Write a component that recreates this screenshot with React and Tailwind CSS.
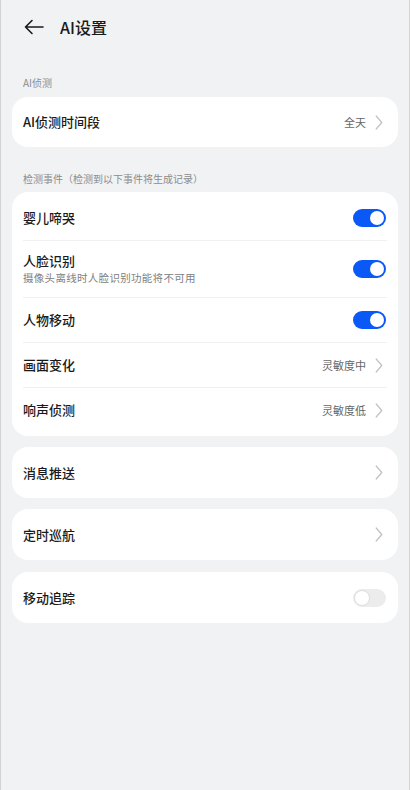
import React, { useState } from "react";

const font = { fontFamily: '"Noto Sans CJK SC", "Noto Sans", sans-serif' };

const Chevron = () => (
    <svg width="8" height="15" viewBox="0 0 8 15" fill="none" className="shrink-0">
        <path d="M1.2 1 L6.8 7.5 L1.2 14" stroke="#c3c3c3" strokeWidth="1.3" strokeLinecap="round" strokeLinejoin="round" />
    </svg>
);

const Toggle = ({ on, onClick }) => (
    <button
        onClick={onClick}
        className={
            on
                ? "w-[33px] h-[18px] rounded-full bg-[#0a59f7] flex items-center justify-end px-[2px] shrink-0"
                : "w-[33px] h-[18px] rounded-full bg-[#ececec] flex items-center justify-start px-[1px] shrink-0"
        }
    >
        <span
            className={
                on
                    ? "w-[14px] h-[14px] rounded-full bg-white"
                    : "w-[16px] h-[16px] rounded-full bg-white border border-[#dedede]"
            }
        />
    </button>
);

const Divider = () => <div className="mx-[11px] h-px bg-[#f0f0f0]" />;

const Value = ({ text }) => (
    <div className="flex items-center gap-[9px]">
        <span className="text-[11px] text-[#666]">{text}</span>
        <Chevron />
    </div>
);

export default function App() {
    const [toggles, setToggles] = useState({ cry: true, face: true, move: true, track: false });
    const flip = (k) => setToggles({ ...toggles, [k]: !toggles[k] });

    return (
        <div style={font} className="w-full min-h-[790px] bg-[#f1f2f4] border-x border-[#d3d3d3] px-[11px] text-[#1a1a1a]">
            {/* header */}
            <div className="h-[54px] flex items-center pl-[12px]">
                <svg width="20" height="16" viewBox="0 0 20 16" fill="none">
                    <path d="M19 8 H1.5 M8 1.5 L1.5 8 L8 14.5" stroke="#1a1a1a" strokeWidth="1.6" strokeLinecap="round" strokeLinejoin="round" />
                </svg>
                <span className="ml-[16px] text-[16px] font-medium">AI设置</span>
            </div>

            <div className="mt-[20px] mb-[7px] pl-[11px] h-[16px] flex items-center text-[10px] text-[#8c8c8c]">AI侦测</div>
            <div className="bg-white rounded-[16px] h-[50px] flex items-center justify-between pl-[11px] pr-[15px]">
                <span className="text-[13px] font-medium">AI侦测时间段</span>
                <Value text="全天" />
            </div>

            <div className="mt-[23px] mb-[6px] pl-[11px] h-[16px] flex items-center text-[10px] text-[#8c8c8c]">
                检测事件（检测到以下事件将生成记录）
            </div>
            <div className="bg-white rounded-[16px] py-[4px]">
                <div className="h-[44px] flex items-center justify-between pl-[11px] pr-[12px]">
                    <span className="text-[13px] font-medium">婴儿啼哭</span>
                    <Toggle on={toggles.cry} onClick={() => flip("cry")} />
                </div>
                <Divider />
                <div className="h-[56px] flex items-center justify-between pl-[11px] pr-[12px]">
                    <div className="flex flex-col">
                        <span className="text-[13px] font-medium leading-[18px]">人脸识别</span>
                        <span className="text-[10.5px] tracking-[0.3px] text-[#808080] leading-[16px]">摄像头离线时人脸识别功能将不可用</span>
                    </div>
                    <Toggle on={toggles.face} onClick={() => flip("face")} />
                </div>
                <Divider />
                <div className="h-[44px] flex items-center justify-between pl-[11px] pr-[12px]">
                    <span className="text-[13px] font-medium">人物移动</span>
                    <Toggle on={toggles.move} onClick={() => flip("move")} />
                </div>
                <Divider />
                <div className="h-[44px] flex items-center justify-between pl-[11px] pr-[15px]">
                    <span className="text-[13px] font-medium">画面变化</span>
                    <Value text="灵敏度中" />
                </div>
                <Divider />
                <div className="h-[44px] flex items-center justify-between pl-[11px] pr-[15px]">
                    <span className="text-[13px] font-medium">响声侦测</span>
                    <Value text="灵敏度低" />
                </div>
            </div>

            <div className="mt-[11px] bg-white rounded-[16px] h-[51px] flex items-center justify-between pl-[11px] pr-[15px]">
                <span className="text-[13px] font-medium">消息推送</span>
                <Chevron />
            </div>
            <div className="mt-[11px] bg-white rounded-[16px] h-[51px] flex items-center justify-between pl-[11px] pr-[15px]">
                <span className="text-[13px] font-medium">定时巡航</span>
                <Chevron />
            </div>
            <div className="mt-[12px] bg-white rounded-[16px] h-[51px] flex items-center justify-between pl-[11px] pr-[12px]">
                <span className="text-[13px] font-medium">移动追踪</span>
                <Toggle on={toggles.track} onClick={() => flip("track")} />
            </div>
        </div>
    );
}
